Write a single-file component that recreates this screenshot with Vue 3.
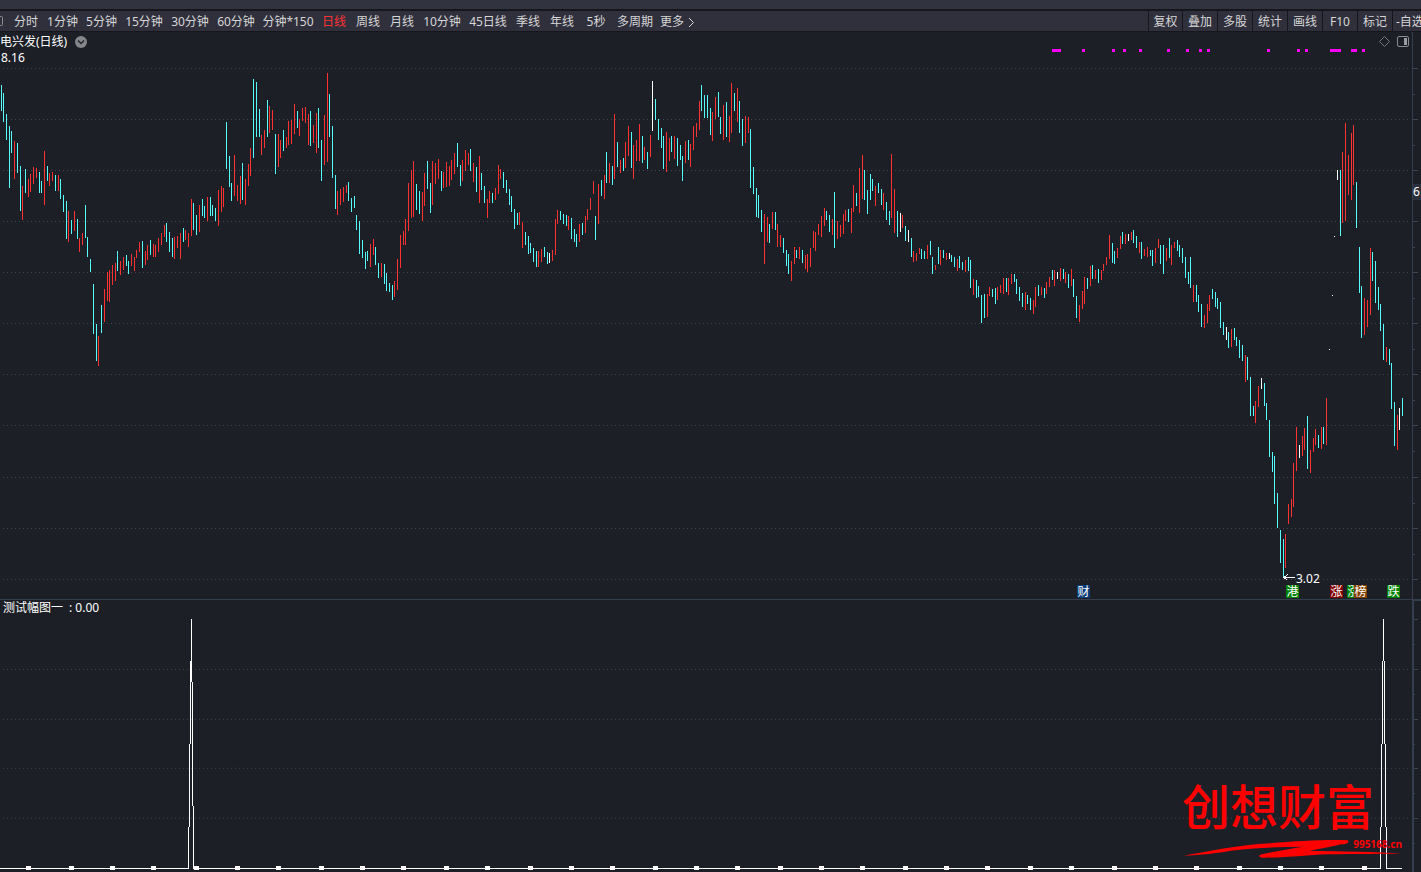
<script setup>
const periods = [
  { label: '分时', size: 's' },
  { label: '1分钟', size: 'm' },
  { label: '5分钟', size: 'm' },
  { label: '15分钟', size: 'l' },
  { label: '30分钟', size: 'l' },
  { label: '60分钟', size: 'l' },
  { label: '分钟*150', size: 'xl' },
  { label: '日线', size: 's', active: true },
  { label: '周线', size: 's' },
  { label: '月线', size: 's' },
  { label: '10分钟', size: 'l' },
  { label: '45日线', size: 'l' },
  { label: '季线', size: 's' },
  { label: '年线', size: 's' },
  { label: '5秒', size: 's' },
  { label: '多周期', size: 'ml' }
]
const tools = ['复权', '叠加', '多股', '统计', '画线', 'F10', '标记', '-自选']

// colour, x, high, low for each bar
const bars = `
c 1 85 111,c 3 93 122,c 6 114 140,c 9 126 188,c 11 131 153,r 14 141 179,c 17 143 173,c 20 166 211,r 22 186 220,c 25 169 193,
r 28 179 197,r 30 174 192,r 33 167 184,r 36 168 178,c 39 172 193,c 41 181 193,r 44 151 205,c 47 166 181,r 49 173 186,r 52 172 181,
c 55 175 191,r 58 175 191,c 60 179 199,c 63 195 212,c 66 201 239,r 68 211 242,c 71 220 234,r 74 211 231,c 77 219 239,r 79 238 252,
r 82 233 245,c 85 205 238,c 87 237 257,c 90 259 272,c 93 284 334,c 96 324 361,r 98 336 366,c 101 305 333,r 104 289 322,r 107 272 301,
r 109 270 302,r 112 265 285,r 115 263 281,c 117 251 271,r 120 261 275,r 123 257 270,c 126 255 266,c 128 261 274,r 131 254 266,r 134 257 271,
r 136 250 258,r 139 242 252,c 142 241 268,r 145 251 265,r 147 245 260,c 150 240 255,r 153 244 257,r 155 245 257,r 158 238 252,r 161 233 245,
r 164 225 237,c 166 223 242,c 169 232 252,c 172 238 257,r 174 237 259,r 177 236 248,r 180 233 259,c 183 228 242,r 185 230 240,r 188 233 247,
r 191 199 236,c 193 203 230,c 196 215 235,r 199 205 232,c 202 199 216,c 204 206 218,r 207 197 221,c 210 197 216,c 212 205 216,c 215 208 221,
r 218 190 226,r 221 186 212,r 223 188 207,c 226 122 169,c 229 156 187,c 231 183 201,r 234 155 196,r 237 185 201,r 240 176 204,c 242 163 200,
r 245 179 205,r 248 164 186,r 250 148 176,c 253 79 158,c 256 82 137,c 259 109 137,r 261 135 155,r 264 130 148,c 267 100 137,r 269 106 133,
r 272 110 130,c 275 134 174,r 278 134 167,r 280 140 158,c 283 130 151,r 286 137 148,r 288 121 145,r 291 120 144,r 294 104 134,c 297 111 128,
r 299 119 136,r 302 108 121,r 305 107 123,r 308 114 145,c 310 111 146,r 313 125 143,r 316 113 153,c 318 108 148,c 321 140 181,r 324 115 165,
r 327 73 162,c 329 94 137,c 332 126 178,c 335 175 209,r 337 191 215,r 340 189 205,r 343 187 202,r 346 185 193,c 348 182 201,c 351 198 212,
c 354 196 208,c 356 215 230,c 359 221 254,c 362 240 258,c 365 252 269,c 367 251 261,r 370 244 267,r 373 239 255,c 375 247 265,c 378 263 278,
r 381 263 277,c 384 264 284,c 386 273 291,c 389 283 292,c 392 285 300,r 394 281 297,r 397 259 290,r 400 235 268,r 403 231 245,r 405 219 245,
r 408 183 231,r 411 170 218,r 413 161 217,c 416 184 210,c 419 191 214,r 422 192 221,r 424 173 206,c 427 161 189,c 430 183 213,r 432 161 205,
r 435 163 184,r 438 159 179,c 441 171 191,r 443 172 188,r 446 162 187,r 449 166 186,r 451 160 180,r 454 153 174,c 457 143 167,c 460 165 186,
r 462 160 181,r 465 150 171,r 468 153 165,c 470 149 171,r 473 163 182,c 476 167 192,r 479 156 203,c 481 173 190,c 484 186 203,r 487 199 218,
r 489 191 203,c 492 193 203,r 495 188 200,r 498 165 194,r 500 169 179,c 503 172 188,c 506 180 193,c 509 189 205,c 511 196 212,c 514 209 229,
c 517 213 225,r 519 212 225,r 522 222 248,c 525 232 245,c 528 236 254,c 530 243 253,c 533 248 262,c 536 251 267,r 538 251 267,r 541 249 262,
c 544 247 257,c 547 252 264,w 549 253 263,r 552 250 261,r 555 219 255,r 557 210 224,c 560 211 220,c 563 214 224,c 566 215 226,r 568 216 230,
c 571 218 239,c 574 229 242,c 576 234 247,r 579 224 242,c 582 223 235,r 585 216 233,r 587 209 220,r 590 198 210,r 593 181 194,c 595 216 240,
r 598 184 224,c 601 180 196,r 604 175 199,c 606 152 183,r 609 163 183,c 612 166 185,r 614 114 179,c 617 142 167,r 620 160 173,c 623 158 171,
r 625 142 168,r 628 126 156,c 631 132 168,r 633 145 179,r 636 140 161,r 639 124 161,c 642 136 163,r 644 147 160,c 647 152 169,r 650 135 157,
w 652 81 131,c 655 99 120,c 658 119 140,c 661 128 148,c 663 136 169,r 666 132 172,r 669 138 161,c 671 136 152,r 674 136 159,c 677 138 166,
c 680 145 160,c 682 156 181,r 685 141 163,c 688 140 160,r 690 144 167,r 693 126 150,r 696 123 137,r 699 101 130,c 701 85 111,c 704 95 118,
c 707 95 118,c 710 108 135,r 712 112 141,r 715 97 119,c 718 92 117,c 720 117 134,r 723 105 140,c 726 102 137,r 729 116 142,r 731 83 133,
c 734 93 111,r 737 88 122,c 739 101 133,c 742 119 146,r 745 116 143,r 748 117 133,c 750 129 188,c 753 167 194,c 756 188 217,c 758 195 218,
c 761 210 232,r 764 214 264,r 767 217 242,c 769 224 243,r 772 212 229,c 775 212 230,r 777 224 247,r 780 235 247,c 783 238 253,c 786 250 266,
c 788 254 274,r 791 261 281,r 794 247 264,c 796 250 258,r 799 247 259,c 802 250 263,r 805 255 269,r 807 254 272,r 810 248 267,r 813 231 248,
r 815 232 251,r 818 224 235,r 821 216 237,r 824 208 226,c 826 211 220,c 829 215 232,r 832 219 235,c 834 192 248,r 837 221 239,r 840 225 237,
r 843 214 234,r 845 210 221,c 848 209 222,r 851 208 233,r 853 185 212,c 856 193 206,r 859 168 213,r 862 155 199,c 864 170 200,c 867 190 214,
c 870 174 200,c 872 179 191,r 875 186 206,c 878 183 193,c 881 189 205,r 883 193 210,c 886 202 220,c 889 211 225,r 891 154 218,r 894 189 233,
c 897 211 237,w 900 213 232,r 902 215 228,c 905 226 241,w 908 230 242,c 911 238 257,r 913 251 262,r 916 253 261,r 919 248 254,c 921 249 259,
c 924 251 259,r 927 245 259,c 930 241 255,c 932 257 274,r 935 265 270,c 938 247 264,r 940 250 265,c 943 250 258,r 946 253 260,w 949 253 259,
c 951 255 262,c 954 257 267,r 957 259 271,c 959 256 268,c 962 262 270,r 965 260 272,c 968 257 271,c 970 260 288,r 973 279 295,c 976 280 298,
c 978 286 297,c 981 295 323,c 984 294 318,r 987 294 317,r 989 287 296,c 992 289 297,c 995 288 304,r 997 287 300,r 1000 285 293,r 1003 278 294,
c 1006 278 292,r 1008 278 295,r 1011 274 284,c 1014 274 282,c 1016 279 294,c 1019 287 301,c 1022 293 307,r 1025 292 310,c 1027 295 304,
c 1030 298 310,r 1033 300 314,r 1035 287 307,c 1038 285 296,r 1041 287 295,c 1044 288 298,r 1046 282 294,r 1049 277 287,c 1052 270 280,
r 1054 270 286,w 1057 272 279,r 1060 268 281,c 1063 269 279,r 1065 272 283,c 1068 274 288,r 1071 269 286,c 1073 279 297,c 1076 296 318,
r 1079 305 322,r 1082 291 309,r 1084 277 304,c 1087 278 289,r 1090 266 286,c 1092 265 279,r 1095 270 279,c 1098 269 283,r 1101 270 280,
r 1103 264 271,r 1106 257 265,r 1109 235 259,c 1112 243 263,c 1114 251 264,r 1117 248 258,r 1120 236 249,c 1122 232 244,r 1125 234 244,
w 1128 234 241,r 1131 232 240,c 1133 230 243,c 1136 236 248,r 1139 242 253,c 1141 242 259,r 1144 249 256,r 1147 247 257,c 1150 250 256,
c 1152 250 266,r 1155 248 263,r 1158 239 248,c 1160 245 264,c 1163 245 274,r 1166 248 261,c 1169 238 258,r 1171 245 265,r 1174 242 248,
c 1177 240 251,c 1179 245 257,c 1182 248 263,c 1185 257 278,c 1188 272 284,c 1190 257 288,r 1193 285 302,c 1196 285 302,c 1198 295 312,
c 1201 304 327,r 1204 315 328,r 1207 304 323,r 1209 295 311,c 1212 289 299,c 1215 292 307,c 1217 298 309,c 1220 302 328,c 1223 322 335,
w 1226 327 340,c 1228 332 348,r 1231 329 347,c 1234 328 340,c 1236 337 346,c 1239 340 358,c 1242 345 361,r 1245 355 382,c 1247 357 380,
c 1250 377 416,c 1253 406 416,r 1255 401 423,r 1258 386 407,w 1261 378 389,c 1264 383 406,c 1266 403 420,c 1269 420 457,c 1272 452 472,
c 1274 456 504,c 1277 493 528,c 1280 530 563,c 1283 539 577,r 1285 534 568,r 1288 504 524,r 1291 499 517,r 1293 463 507,r 1296 427 471,
w 1299 445 458,r 1302 436 456,r 1304 428 450,c 1307 416 469,r 1310 450 473,r 1313 438 452,r 1315 429 445,c 1318 435 448,r 1321 427 449,
c 1323 427 444,r 1326 398 445,w 1329 349 350,w 1332 295 296,w 1334 236 237,w 1337 170 180,c 1340 170 236,r 1342 152 223,r 1345 123 221,
r 1348 155 195,r 1351 133 200,r 1353 125 185,c 1356 182 228,c 1359 247 293,c 1361 286 338,r 1364 298 335,r 1367 300 327,r 1370 248 315,
c 1372 252 281,c 1375 261 303,c 1378 287 310,c 1380 304 331,c 1383 324 360,r 1386 347 362,c 1389 349 365,c 1391 363 409,c 1394 402 446,
r 1397 415 450,w 1399 408 430,c 1402 398 416`
  .split(',')
  .map((row) => row.trim().split(' '))

const barPath = (kind) =>
  bars
    .filter((b) => b[0] === kind)
    .map(([, x, high, low]) => `M${x} ${high}h1V${low}h-1z`)
    .join('')
const series = ['r', 'c', 'w'].map((kind) => ({ kind, d: barPath(kind) }))

const mainGrid = [68, 119, 170, 221, 272, 323, 374, 425, 477, 528, 579]
const subGrid = [669, 719, 768, 818]
const mainMinor = [94, 145, 247, 298, 349, 400, 451, 503, 554]
const subMajor = [619, ...subGrid]
const subMinor = [644, 694, 744, 793, 843]

const signals = [
  [1052, 9], [1082, 3], [1112, 3], [1123, 3], [1139, 3], [1167, 3], [1186, 3], [1199, 3], [1207, 3],
  [1267, 3], [1297, 3], [1305, 3], [1330, 11], [1351, 6], [1362, 3]
]

const badges = [
  { text: '财', x: 1077, tone: 'blue' },
  { text: '港', x: 1286, tone: 'green' },
  { text: '涨', x: 1330, tone: 'red' },
  { text: '涨', x: 1347, tone: 'green' },
  { text: '榜', x: 1354, tone: 'brown' },
  { text: '跌', x: 1387, tone: 'green' }
]

const markers = [
  26, 69, 110, 151, 194, 235, 276, 319, 360, 401, 444, 485, 528, 569, 610, 653, 694, 735, 778, 819, 860,
  903, 944, 985, 1028, 1069, 1112, 1153, 1194, 1237, 1278, 1319, 1362
]

const spikes =
  'M191 619h1V682h-1zM190 661h1V744h-1zM189 744h1V827h-1zM188 827h1V868h-1zM192 682h1V806h-1zM193 806h1V868h-1z' +
  'M1383 619h1V661h-1zM1382 661h1V744h-1zM1384 661h1V744h-1zM1381 744h1V827h-1zM1385 744h1V827h-1zM1380 827h1V868h-1zM1386 827h1V868h-1z' +
  'M0 868H189v1H0zM193 868H1381v1H193zM1386 868H1402v1H1386z'

const plotWidth = 1412
const plotTop = 32
const plotHeight = 567
const at = (x, y) => ({
  left: `${(x / plotWidth) * 100}%`,
  top: `${((y - plotTop) / plotHeight) * 100}%`
})
</script>

<template>
  <div class="app">
    <div class="strip"></div>
    <nav class="toolbar">
      <div class="periods">
        <svg class="edge" width="9" height="19" viewBox="0 0 9 19">
          <path d="M0 5.5h1.5q1 0 1 1v7q0 1-1 1H0" fill="none" stroke="#8b8b90" />
        </svg>
        <button
          v-for="p in periods"
          :key="p.label"
          type="button"
          :class="['period', p.size, { active: p.active }]"
        >{{ p.label }}</button>
        <button type="button" class="period more">
          更多
          <svg width="7" height="11" viewBox="0 0 7 11">
            <path d="M1 1L5.5 5.5L1 10" fill="none" stroke="#d6d6d6" />
          </svg>
        </button>
      </div>
      <div class="tools">
        <button v-for="t in tools" :key="t" type="button" class="tool">{{ t }}</button>
      </div>
    </nav>

    <section class="pane main">
      <div class="plot">
        <svg class="canvas" viewBox="0 32 1412 567" preserveAspectRatio="none" shape-rendering="crispEdges">
          <path v-for="y in mainGrid" :key="y" class="grid" :d="`M3 ${y}.5H1408`" />
          <path v-for="s in series" :key="s.kind" :class="s.kind" :d="s.d" />
          <rect v-for="[x, w] in signals" :key="x" :x="x" y="49" :width="w" height="3" fill="#ff00ff" />
          <path d="M1283 577h12v1h-12zM1284 576h2v3h-2zM1286 575h1v1h-1zM1286 579h1v1h-1zM1287 574h1v1h-1z" fill="#fff" />
        </svg>
        <header class="head">
          <div class="title">
            <span>电兴发(日线)</span>
            <button type="button" class="expand" aria-label="展开">
              <svg width="12" height="12" viewBox="0 0 12 12">
                <circle cx="6" cy="6" r="6" fill="#85868a" />
                <path d="M3 4.5L6 7.5L9 4.5" fill="none" stroke="#22252b" stroke-width="1.5" />
              </svg>
            </button>
          </div>
          <div class="high">8.16</div>
        </header>
        <div class="corner">
          <svg width="11" height="11" viewBox="0 0 11 11">
            <path d="M5.5 .5l5 5l-5 5l-5-5z" fill="none" stroke="#77787c" />
          </svg>
          <svg width="12" height="11" viewBox="0 0 12 11">
            <rect x=".5" y=".5" width="11" height="10" rx="1.5" fill="none" stroke="#8a8b8f" />
            <rect x="7" y="2" width="3" height="7" fill="#9a9b9f" />
          </svg>
        </div>
        <span class="low" :style="at(1296, 571)">3.02</span>
        <span
          v-for="b in badges"
          :key="b.x"
          :class="['badge', b.tone]"
          :style="at(b.x, 585)"
        >{{ b.text }}</span>
      </div>
      <div class="axis">
        <svg class="canvas" viewBox="0 32 8 567" preserveAspectRatio="none" shape-rendering="crispEdges">
          <rect v-for="y in mainGrid" :key="y" x="0" :y="y" width="5" height="1" fill="#3b4555" />
          <rect v-for="y in mainMinor" :key="y" x="0" :y="y" width="2" height="1" fill="#3b4555" />
        </svg>
        <span class="price">6</span>
      </div>
    </section>

    <section class="pane sub">
      <div class="plot">
        <svg class="canvas" viewBox="0 600 1412 272" preserveAspectRatio="none" shape-rendering="crispEdges">
          <path v-for="y in subGrid" :key="y" class="grid" :d="`M3 ${y}.5H1408`" />
          <path :d="spikes" fill="#fff" />
          <rect v-for="x in markers" :key="x" :x="x" y="866" width="5" height="4" fill="#fff" />
        </svg>
        <div class="readout">
          <span>测试幅图一</span>
          <span>: 0.00</span>
        </div>
        <div class="logo">
          <div class="brand">创想财富</div>
          <svg class="swoosh" width="222" height="24" viewBox="0 0 222 24">
            <path
              d="M2 19.5C30 15 55 9 88 7.3C115 5 145 3.5 166 4.3C167 7 165 8 158 8.5C148 11 135 13 128 15C160 15 195 16 220 17.5C190 18 160 18 138 18.5C118 20 95 22 80 21.7C76 21 77 19 79 18.5C95 15 108 13 121 10.7C95 11 75 12 55 14C35 17 18 19.5 2 19.5Z"
              fill="#ff0000"
            />
          </svg>
          <span class="site">995168.cn</span>
        </div>
      </div>
      <div class="axis">
        <svg class="canvas" viewBox="0 600 7 272" preserveAspectRatio="none" shape-rendering="crispEdges">
          <rect x="0" y="600" width="7" height="1" fill="#343e4d" />
          <rect v-for="y in subMajor" :key="y" x="0" :y="y" width="4" height="1" fill="#3b4555" />
          <rect v-for="y in subMinor" :key="y" x="0" :y="y" width="1" height="1" fill="#3b4555" />
        </svg>
      </div>
    </section>
  </div>
</template>

<style>
body {
  background: #1c1f26;
}
</style>

<style scoped>
.app {
  display: flex;
  flex-direction: column;
  height: 100vh;
  overflow: hidden;
  background: #1c1f26;
  color: #fff;
  font: 12px/16px 'Noto Sans', 'Noto Sans CJK SC', sans-serif;
}
button {
  padding: 0;
  border: 0;
  background: none;
  color: inherit;
  font: inherit;
  white-space: nowrap;
}
svg {
  display: block;
}
.strip {
  flex: none;
  height: 9px;
  background: #31343f;
  border-bottom: 2px solid #15171c;
}
.toolbar {
  flex: none;
  display: flex;
  justify-content: space-between;
  height: 20px;
  background: #30303d;
  border-bottom: 1px solid #15171c;
  color: #d6d6d6;
}
.periods,
.tools {
  display: flex;
}
.period {
  padding-top: 2px;
  text-align: center;
}
.s {
  width: 34px;
}
.m {
  width: 39px;
}
.ml {
  width: 44px;
}
.l {
  width: 46px;
}
.xl {
  width: 58px;
}
.active {
  color: #ff3232;
}
.more {
  display: flex;
  align-items: center;
  gap: 4px;
  padding-left: 3px;
}
.tool {
  width: 35px;
  padding-top: 2px;
  border-left: 1px solid #15171c;
  text-align: center;
}
.tool:first-child {
  width: 34px;
}
.tool:last-child {
  width: 29px;
  padding-left: 3px;
  overflow: hidden;
  text-align: left;
}
.pane {
  display: flex;
  box-sizing: border-box;
  min-height: 0;
}
.main {
  flex: 568 1 0;
  border-bottom: 1px solid #343e4d;
}
.sub {
  flex: 272 1 0;
}
.plot {
  position: relative;
  flex: 1;
  min-width: 0;
}
.axis {
  position: relative;
  flex: none;
  box-sizing: border-box;
  width: 9px;
  border-left: 1px solid #343e4d;
}
.sub .axis {
  border-left-width: 2px;
}
.canvas {
  position: absolute;
  inset: 0;
  width: 100%;
  height: 100%;
}
.grid {
  fill: none;
  stroke: #42464d;
  stroke-dasharray: 1 3;
}
.r {
  fill: #ff3232;
}
.c {
  fill: #54fcfc;
}
.w {
  fill: #fff;
}
.head {
  position: relative;
  padding-top: 2px;
}
.title {
  display: flex;
  align-items: center;
  gap: 8px;
}
.high {
  padding-left: 1px;
}
.corner {
  position: absolute;
  top: 4px;
  right: 3px;
  display: flex;
  gap: 7px;
}
.low {
  position: absolute;
}
.badge {
  position: absolute;
  width: 13px;
  height: 13px;
  line-height: 13px;
  text-align: center;
}
.blue {
  background: #0a3c78;
}
.green {
  background: #008000;
}
.red {
  background: #800000;
}
.brown {
  background: #804000;
}
.price {
  position: absolute;
  top: 152px;
  left: 0;
  width: 8px;
  background: #2c2f3c;
}
.readout {
  position: relative;
  display: flex;
  gap: 6px;
  padding-left: 3px;
}
.logo {
  position: absolute;
  right: 8px;
  bottom: 12px;
  width: 222px;
  color: #ff0000;
}
.brand {
  height: 60px;
  font: 500 48px/56px 'Noto Sans CJK SC', sans-serif;
}
.site {
  position: absolute;
  right: 2px;
  bottom: 8px;
  font-size: 10px;
  font-weight: bold;
}
</style>
